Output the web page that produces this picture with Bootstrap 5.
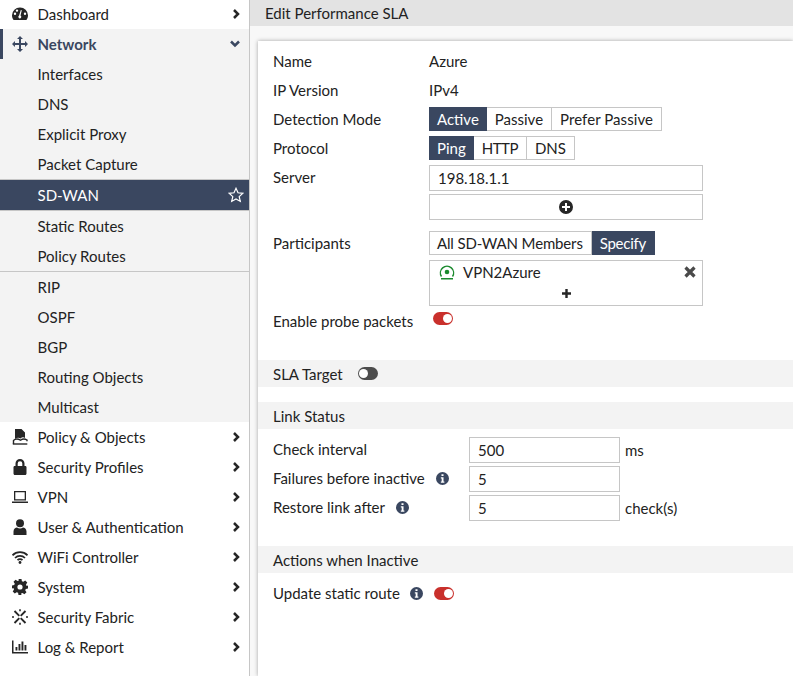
<!DOCTYPE html>
<html lang="en">
<head>
<meta charset="UTF-8">
<title>Edit Performance SLA</title>
<link href="https://cdn.jsdelivr.net/npm/bootstrap@5.3.0/dist/css/bootstrap.min.css" rel="stylesheet">
<style>
    html, body { height: 100%; overflow: hidden; }
    body { font-family: Lato, "Liberation Sans", sans-serif; font-size: 15px; line-height: 20px; color: #222; background: #f8f8f8; }

    /* left menu */
    .side-menu { width: 250px; height: 677px; flex: none; background: #fff; border-right: 1px solid #c6c6c6; margin-top: -1px; }
    .menu-row { height: 30px; padding: 0 8px 0 12px; color: #222; }
    .menu-ico { width: 16px; height: 16px; margin-right: 9.5px; flex: none; fill: #262626; }
    .menu-chev { width: 10px; height: 12px; margin-left: auto; flex: none; fill: none; stroke: #262626; stroke-width: 2.5; }
    .menu-open { background: #f3f3f3; }
    .net-row { font-weight: 700; color: #3a4760; box-shadow: inset 3px 0 0 #3a4760; }
    .net-row .menu-ico { fill: #3a4760; }
    .net-row .menu-chev { stroke: #3a4760; width: 12px; height: 10px; margin-right: 0; }
    .sub-row { padding-left: 37.5px; }
    .sub-active { height: 32px; background: #3a4760; color: #fff; border-top: 1px solid #c6c6c6; border-bottom: 1px solid #c6c6c6; padding-right: 5px; }
    .sub-split { border-top: 1px solid #c6c6c6; height: 31px; }
    .star-ico { width: 16px; height: 16px; margin-left: auto; fill: none; stroke: #fff; stroke-width: 1.2; }

    /* main panel */
    .main-pane { min-width: 0; }
    .pane-title { height: 26px; background: #e3e3e3; padding-left: 15px; line-height: 26px; }
    .pane-gap { height: 15px; }
    .form-sheet { margin-left: 8px; height: 635px; background: #fff; box-shadow: 0 0 4px rgba(0,0,0,.35); padding-top: 5px; }
    .form-block { padding: 0 15px; }
    .field-row { display: flex; align-items: center; min-height: 29px; }
    .field-lbl { width: 156px; flex: none; }
    .seg-btn { height: 24px; line-height: 22px; padding: 0 8px; font-size: 15px; border: 1px solid #c6c6c6; border-left-width: 0; background: #fff; color: #222; }
    .seg-btn:first-child { border-left-width: 1px; padding-left: 7px; }
    .seg-btn:first-child.seg-on { padding-right: 7px; }
    .seg-btn.seg-on { background: #3a4760; border-color: #3a4760; color: #fff; }
    .seg-http { letter-spacing: -.5px; }
    .seg-long { letter-spacing: .06px; }
    .server-row { margin-top: 3px; }
    .server-row .field-lbl { line-height: 25px; }
    .text-box { width: 274px; height: 26px; border: 1px solid #c6c6c6; padding: 0 8px; line-height: 24px; background: #fff; }
    .add-box { margin-top: 3px; }
    .add-box svg { width: 14px; height: 14px; fill: #262626; }
    .part-row { margin-top: 11px; min-height: 24px; }
    .part-row .seg-btn:first-child { letter-spacing: -.15px; }
    .part-row .seg-on { letter-spacing: -.25px; }
    .member-wrap { margin-top: 5px; }
    .member-box { width: 274px; height: 46px; border: 1px solid #c6c6c6; padding: 0 8px; }
    .member-line { height: 22px; }
    .member-name { margin-left: 9px; }
    .tun-ico { width: 16px; height: 16px; margin-left: 1px; margin-right: -1px; fill: none; stroke: #1b8a2e; stroke-width: 1.4; }
    .cross-ico { width: 12px; height: 12px; margin-left: auto; stroke: #4a4a4a; stroke-width: 3.2; margin-right: -2px; }
    .plus-ico { width: 9px; height: 9px; stroke: #262626; stroke-width: 2.4; display: block; margin: 6px auto 0; }
    .switch-on, .switch-off { display: inline-block; width: 20px; height: 13px; border-radius: 7px; position: relative; flex: none; }
    .switch-on { background: #c9302c; }
    .switch-off { background: #4d4d4d; }
    .switch-on::after, .switch-off::after { content: ""; position: absolute; top: 2px; width: 9px; height: 9px; border-radius: 50%; background: #fff; }
    .switch-on::after { right: 1px; }
    .switch-off::after { left: 1px; }
    .probe-lbl { width: 160px; }
    .probe-switch { margin-bottom: 4px; }
    .band { height: 27px; line-height: 29px; background: #f3f3f3; padding: 0 15px; }
    .sla-band { margin-top: 25px; }
    .sla-band .switch-off { margin-left: 15px; align-self: center; }
    .link-band { margin-top: 15px; }
    .link-block { padding-top: 8px; }
    .num-row { height: 26px; margin-bottom: 3px; }
    .num-lbl { width: 196px; flex: none; padding-bottom: 2px; }
    .num-box { width: 151px; height: 26px; border: 1px solid #c6c6c6; padding: 0 8px; line-height: 24px; margin-right: 5px; }
    .info-ico { width: 13px; height: 13px; fill: #3a4760; margin-left: 11px; flex: none; }
    .action-band { margin-top: 25px; }
    .action-row { height: 40px; }
    .action-row .info-ico { margin-left: 10.5px; }
    .action-row .switch-on { margin-left: 10.5px; }
</style>
</head>
<body>
<svg width="0" height="0" class="position-absolute">
    <symbol id="chev" viewBox="0 0 10 12"><path d="M3 2 7 6 3 10"/></symbol>
    <symbol id="chevd" viewBox="0 0 12 10"><path d="M2 2.500 6 6.500 10 2.500"/></symbol>
    <symbol id="info" viewBox="0 0 14 14"><path fill-rule="evenodd" d="M7 0a7 7 0 1 1 0 14A7 7 0 0 1 7 0zM5.900 2.400h2.200v2H5.900zM5.200 5.600h2.900v4.600h.9v1.400H5.200v-1.400h.9V7H5.200z"/></symbol>
</svg>

<div class="d-flex">
    <!-- side menu -->
    <nav class="side-menu d-flex flex-column">
        <div class="menu-row d-flex align-items-center">
            <svg class="menu-ico" viewBox="0 0 16 16"><path fill-rule="evenodd" d="M8 1.500a7.900 7.900 0 0 0-8 7.800c0 1.700.5 3.200 1.400 4.400.2.300.5.300.8.300h11.600c.3 0 .6 0 .8-.3.900-1.200 1.400-2.700 1.400-4.400a7.900 7.900 0 0 0-8-7.800zM3 9a1.200 1.200 0 1 1 0-2.400A1.200 1.200 0 0 1 3 9zm2-3.200a1.200 1.200 0 1 1 0-2.400 1.200 1.200 0 0 1 0 2.400zm3 6.700a1.700 1.700 0 0 1-.9-3.100l1.700-5.500 1 .3-1.300 5.200a1.700 1.700 0 0 1-.5 3.100zM13 9a1.200 1.200 0 1 1 0-2.400A1.200 1.200 0 0 1 13 9z"/></svg>
            <span>Dashboard</span>
            <svg class="menu-chev"><use href="#chev"/></svg>
        </div>
        <div class="menu-open">
            <div class="menu-row net-row d-flex align-items-center">
                <svg class="menu-ico" viewBox="0 0 16 16"><path d="M8 0l3 3H9v4h4V5l3 3-3 3V9H9v4h2l-3 3-3-3h2V9H3v2L0 8l3-3v2h4V3H5z"/></svg>
                <span>Network</span>
                <svg class="menu-chev"><use href="#chevd"/></svg>
            </div>
            <div class="menu-row sub-row d-flex align-items-center">Interfaces</div>
            <div class="menu-row sub-row d-flex align-items-center">DNS</div>
            <div class="menu-row sub-row d-flex align-items-center">Explicit Proxy</div>
            <div class="menu-row sub-row d-flex align-items-center">Packet Capture</div>
            <div class="menu-row sub-row sub-active d-flex align-items-center">
                <span>SD-WAN</span>
                <svg class="star-ico" viewBox="0 0 16 16"><path d="M8 1.300l2 4.500 4.900.5-3.700 3.300 1.100 4.800L8 12l-4.300 2.400 1.100-4.800L1.100 6.300 6 5.800z"/></svg>
            </div>
            <div class="menu-row sub-row d-flex align-items-center">Static Routes</div>
            <div class="menu-row sub-row d-flex align-items-center">Policy Routes</div>
            <div class="menu-row sub-row sub-split d-flex align-items-center">RIP</div>
            <div class="menu-row sub-row d-flex align-items-center">OSPF</div>
            <div class="menu-row sub-row d-flex align-items-center">BGP</div>
            <div class="menu-row sub-row d-flex align-items-center">Routing Objects</div>
            <div class="menu-row sub-row d-flex align-items-center">Multicast</div>
        </div>
        <div class="menu-row d-flex align-items-center">
            <svg class="menu-ico" viewBox="0 0 16 16"><path d="M3 0h6.500L13 3.500V9c-1.500-1-3-1-4.500.5C7 8.500 5 8.500 3 10z"/><path d="M1.500 15V11.500C3 10 6 9.800 8.500 11.200 10.500 9.800 13 9.800 15 11v1.300" fill="none" stroke="#262626" stroke-width="1.400"/><path d="M.8 14.300h14.500v1.400H.8z"/></svg>
            <span>Policy &amp; Objects</span>
            <svg class="menu-chev"><use href="#chev"/></svg>
        </div>
        <div class="menu-row d-flex align-items-center">
            <svg class="menu-ico" viewBox="0 0 16 16"><path fill-rule="evenodd" d="M8 0a4.500 4.500 0 0 1 4.500 4.500V7h.7c.6 0 1.300.5 1.300 1.200v6.300c0 .8-.6 1.500-1.300 1.500H2.800c-.7 0-1.300-.7-1.300-1.500V8.200C1.500 7.500 2.200 7 2.800 7h.7V4.500A4.500 4.500 0 0 1 8 0zm0 2.200a2.300 2.300 0 0 0-2.300 2.300V7h4.600V4.500A2.300 2.300 0 0 0 8 2.200z"/></svg>
            <span>Security Profiles</span>
            <svg class="menu-chev"><use href="#chev"/></svg>
        </div>
        <div class="menu-row d-flex align-items-center">
            <svg class="menu-ico" viewBox="0 0 16 16"><path fill-rule="evenodd" d="M2 2h12v9.500H2zm1.300 1.300v6.900h9.400V3.300zM0 12.500h16V14H0z"/></svg>
            <span>VPN</span>
            <svg class="menu-chev"><use href="#chev"/></svg>
        </div>
        <div class="menu-row d-flex align-items-center">
            <svg class="menu-ico" viewBox="0 0 16 16"><circle cx="8" cy="4.200" r="4"/><path d="M1.500 16v-3.500C1.500 10 3.500 8.500 5 8.500c1 .6 2 .9 3 .9s2-.3 3-.9c1.500 0 3.500 1.500 3.500 4V16z"/></svg>
            <span>User &amp; Authentication</span>
            <svg class="menu-chev"><use href="#chev"/></svg>
        </div>
        <div class="menu-row d-flex align-items-center">
            <svg class="menu-ico" viewBox="0 0 16 16"><path d="M.5 6.300a10.500 10.500 0 0 1 15 0M3 9a7 7 0 0 1 10 0" fill="none" stroke="#262626" stroke-width="1.700"/><path d="M5.500 11.200a3.500 3.500 0 0 1 5 0" fill="none" stroke="#262626" stroke-width="1.700"/><circle cx="8" cy="13.500" r="1.400"/></svg>
            <span>WiFi Controller</span>
            <svg class="menu-chev"><use href="#chev"/></svg>
        </div>
        <div class="menu-row d-flex align-items-center">
            <svg class="menu-ico" viewBox="0 0 16 16"><path fill-rule="evenodd" d="M6.500 0h3l.4 2.200 1.400.6 1.900-1.300 2.100 2.100-1.300 1.900.6 1.400L16 6.500v3l-2.200.4-.6 1.400 1.300 1.900-2.100 2.100-1.900-1.300-1.400.6L9.500 16h-3l-.4-2.200-1.400-.6-1.900 1.300-2.100-2.100 1.300-1.900-.6-1.400L0 9.500v-3l2.200-.4.6-1.400-1.300-1.900 2.100-2.100 1.900 1.300 1.400-.6zM8 5.400a2.600 2.600 0 1 0 0 5.200 2.600 2.600 0 0 0 0-5.200z"/></svg>
            <span>System</span>
            <svg class="menu-chev"><use href="#chev"/></svg>
        </div>
        <div class="menu-row d-flex align-items-center">
            <svg class="menu-ico" viewBox="0 0 16 16"><path d="M2.500 2 7.300 6.800M13.500 2 8.700 6.800M2.500 14 7.300 9.200M13.500 14 8.700 9.200" fill="none" stroke="#262626" stroke-width="1.900"/><path d="M7.200.3h1.600v2H7.200zM7.200 13.700h1.600v2H7.200zM0 7.200h2v1.600H0zM14 7.200h2v1.600h-2z"/></svg>
            <span>Security Fabric</span>
            <svg class="menu-chev"><use href="#chev"/></svg>
        </div>
        <div class="menu-row d-flex align-items-center">
            <svg class="menu-ico" viewBox="0 0 16 16"><path d="M0 1.500h1.500v11.500H16v1.500H0zM3.500 8h1.900v3.500H3.500zM6.500 5h1.900v6.500H6.500zM9.500 2.500h1.900v9H9.500zM12.500 6h1.900v5.500h-1.900z"/></svg>
            <span>Log &amp; Report</span>
            <svg class="menu-chev"><use href="#chev"/></svg>
        </div>
    </nav>

    <!-- edit panel -->
    <main class="main-pane flex-grow-1">
        <div class="pane-title">Edit Performance SLA</div>
        <div class="pane-gap"></div>
        <div class="form-sheet">
            <div class="form-block">
                <div class="field-row"><span class="field-lbl">Name</span><span>Azure</span></div>
                <div class="field-row"><span class="field-lbl">IP Version</span><span>IPv4</span></div>
                <div class="field-row">
                    <span class="field-lbl">Detection Mode</span>
                    <div class="d-flex">
                        <span class="seg-btn seg-on">Active</span><span class="seg-btn">Passive</span><span class="seg-btn seg-long">Prefer Passive</span>
                    </div>
                </div>
                <div class="field-row">
                    <span class="field-lbl">Protocol</span>
                    <div class="d-flex">
                        <span class="seg-btn seg-on">Ping</span><span class="seg-btn seg-http">HTTP</span><span class="seg-btn">DNS</span>
                    </div>
                </div>
                <div class="d-flex server-row">
                    <span class="field-lbl">Server</span>
                    <div>
                        <div class="text-box">198.18.1.1</div>
                        <div class="text-box add-box d-flex align-items-center justify-content-center">
                            <svg viewBox="0 0 14 14"><path fill-rule="evenodd" d="M7 0a7 7 0 1 1 0 14A7 7 0 0 1 7 0zM6 3v3H3v2h3v3h2V8h3V6H8V3z"/></svg>
                        </div>
                    </div>
                </div>
                <div class="field-row part-row">
                    <span class="field-lbl">Participants</span>
                    <div class="d-flex">
                        <span class="seg-btn">All SD-WAN Members</span><span class="seg-btn seg-on">Specify</span>
                    </div>
                </div>
                <div class="d-flex member-wrap">
                    <span class="field-lbl"></span>
                    <div class="member-box">
                        <div class="member-line d-flex align-items-center">
                            <svg class="tun-ico" viewBox="0 0 16 16"><path d="M2.500 12.500a6.600 6.600 0 1 1 11 0M2 14.800h12"/><circle cx="8" cy="8" r="2.300" fill="#1b8a2e" stroke="none"/></svg>
                            <span class="member-name">VPN2Azure</span>
                            <svg class="cross-ico" viewBox="0 0 12 12"><path d="M1.500 1.500l9 9M10.500 1.500l-9 9"/></svg>
                        </div>
                        <svg class="plus-ico" viewBox="0 0 9 9"><path d="M4.500 0v9M0 4.500h9"/></svg>
                    </div>
                </div>
                <div class="field-row">
                    <span class="field-lbl probe-lbl">Enable probe packets</span>
                    <span class="switch-on probe-switch"></span>
                </div>
            </div>

            <div class="band sla-band d-flex align-items-start">SLA Target<span class="switch-off"></span></div>
            <div class="band link-band">Link Status</div>
            <div class="form-block link-block">
                <div class="d-flex align-items-center num-row">
                    <span class="num-lbl">Check interval</span><span class="num-box">500</span><span>ms</span>
                </div>
                <div class="d-flex align-items-center num-row">
                    <span class="num-lbl d-flex align-items-center">Failures before inactive<svg class="info-ico"><use href="#info"/></svg></span><span class="num-box">5</span>
                </div>
                <div class="d-flex align-items-center num-row">
                    <span class="num-lbl d-flex align-items-center">Restore link after<svg class="info-ico"><use href="#info"/></svg></span><span class="num-box">5</span><span>check(s)</span>
                </div>
            </div>
            <div class="band action-band">Actions when Inactive</div>
            <div class="form-block d-flex align-items-center action-row">
                <span>Update static route</span><svg class="info-ico"><use href="#info"/></svg><span class="switch-on"></span>
            </div>
        </div>
    </main>
</div>
<script src="https://cdn.jsdelivr.net/npm/bootstrap@5.3.0/dist/js/bootstrap.bundle.min.js"></script>
</body>
</html>
